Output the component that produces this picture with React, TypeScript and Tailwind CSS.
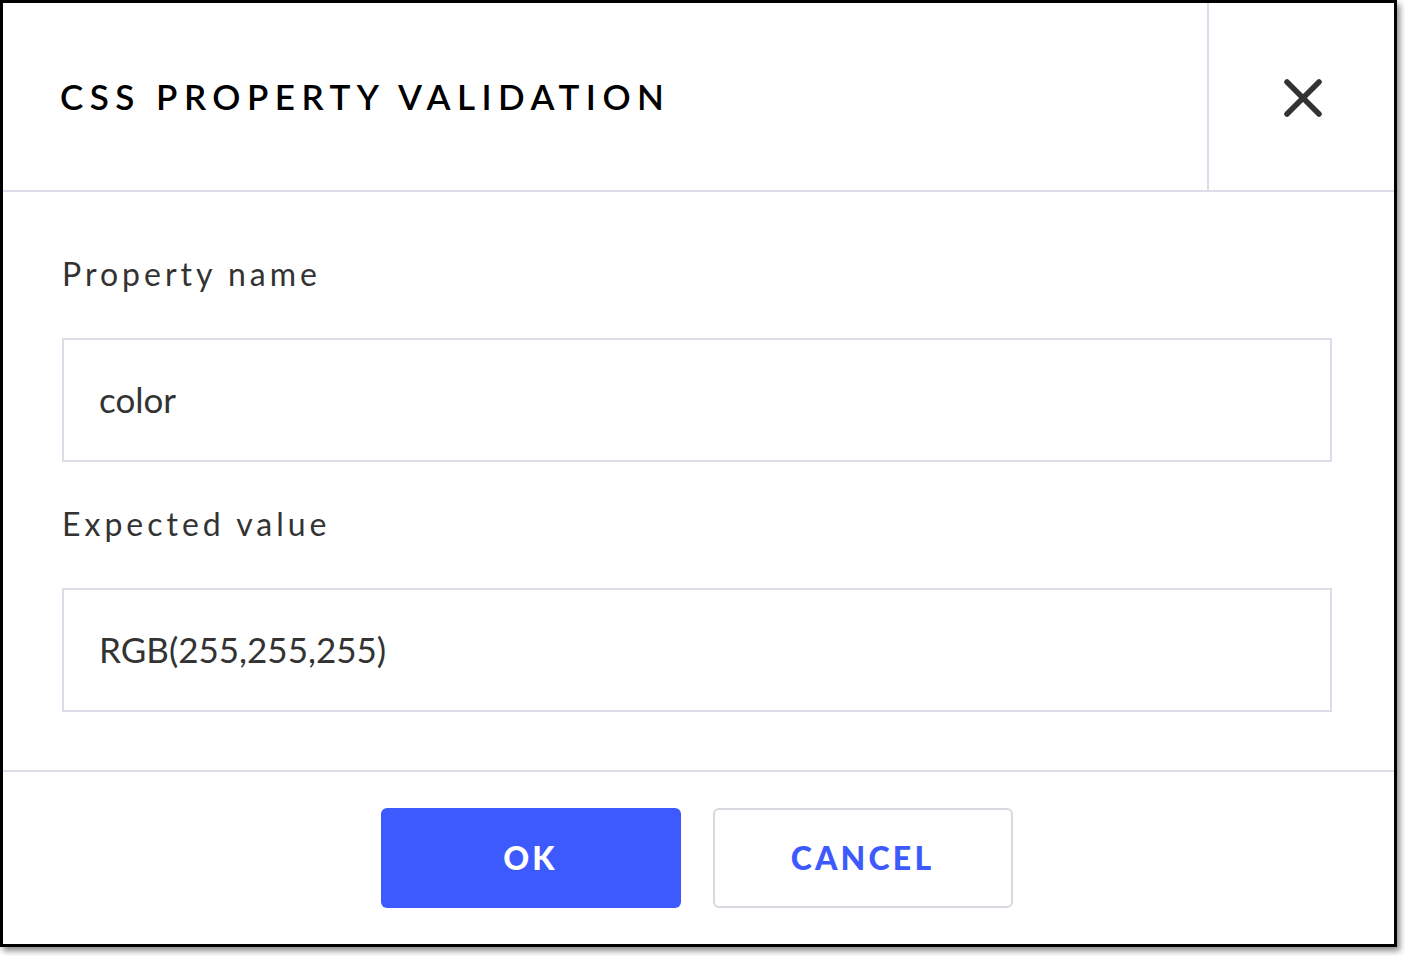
import React from 'react';

const Field = ({ label, value }: { label: string; value: string }) => (
  <div className="flex flex-col">
    <label className="text-[32px] leading-[40px] tracking-[0.125em] text-[#333333]">{label}</label>
    <div className="mt-[44px] h-[124px] border-2 border-[#dcdde8] flex items-center pl-[35px] pb-[2px]">
      <span className="text-[35px] leading-none text-[#333333]">{value}</span>
    </div>
  </div>
);

export default function App() {
  return (
    <div className="min-h-screen bg-white" style={{ fontFamily: 'Lato, "Open Sans", sans-serif' }}>
      <div className="w-[1397px] h-[947px] border-[3px] border-black bg-white shadow-[3px_4px_6px_rgba(0,0,0,0.45)] flex flex-col">
        {/* Header */}
        <header className="h-[189px] flex border-b-2 border-[#dcdde8]">
          <div className="flex-1 flex items-center pl-[57px]">
            <h1 className="text-[35px] font-semibold tracking-[0.185em] text-black">CSS PROPERTY VALIDATION</h1>
          </div>
          <button className="w-[187px] border-l-2 border-[#dcdde8] flex items-center justify-center pt-[3px] pl-[2px]">
            <svg width="38" height="38" viewBox="0 0 38 38" fill="none" stroke="#333333" strokeWidth="5.5" strokeLinecap="round">
              <line x1="3" y1="3" x2="35" y2="35" />
              <line x1="35" y1="3" x2="3" y2="35" />
            </svg>
          </button>
        </header>

        {/* Body */}
        <main className="flex-1 pl-[59px] pr-[62px] pt-[62px] flex flex-col gap-[42px]">
          <Field label="Property name" value="color" />
          <Field label="Expected value" value="RGB(255,255,255)" />
        </main>

        {/* Footer */}
        <footer className="h-[174px] border-t-2 border-[#dcdde8] flex items-center justify-center gap-8 pr-[4px] pb-[1px]">
          <button className="w-[300px] h-[100px] rounded-md bg-[#3d5afe] text-white text-[32px] font-black tracking-[0.1em]">
            OK
          </button>
          <button className="w-[300px] h-[100px] rounded-md border-2 border-[#d6d9dd] bg-white text-[#3d5afe] text-[32px] font-black tracking-[0.1em]">
            CANCEL
          </button>
        </footer>
      </div>
    </div>
  );
}
